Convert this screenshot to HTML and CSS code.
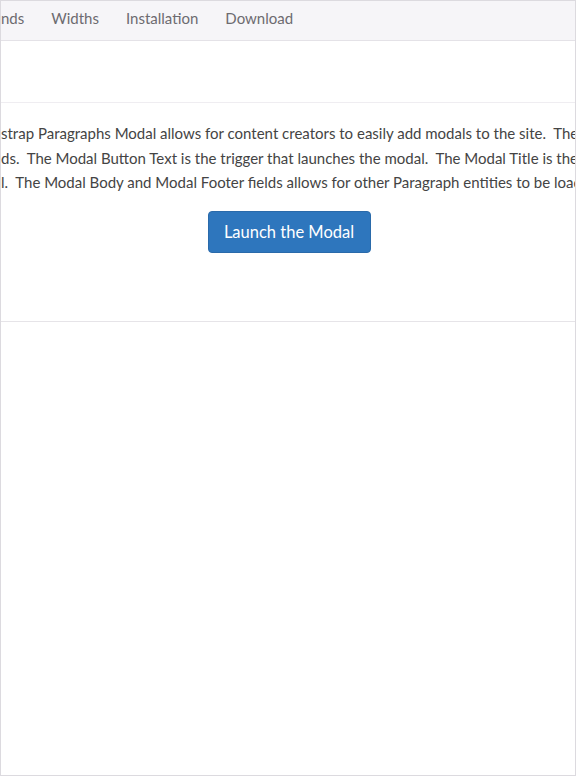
FILE: index.html
```html
<!DOCTYPE html>
<html lang="en">
<head>
<meta charset="utf-8">
<title>Bootstrap Paragraphs Modal</title>
<link rel="stylesheet" href="styles.css">
</head>
<body>
<div class="frame">
  <nav class="nav">
    <a class="nav-link">nds</a>
    <a class="nav-link">Widths</a>
    <a class="nav-link">Installation</a>
    <a class="nav-link">Download</a>
  </nav>
  <div class="spacer"></div>
  <section class="modal-section">
    <div class="desc">
      <p class="line">strap Paragraphs Modal allows for content creators to easily add modals to the site.&nbsp; The</p>
      <p class="line">ds.&nbsp; The Modal Button Text is the trigger that launches the modal.&nbsp; The Modal Title is the</p>
      <p class="line">l.&nbsp; The Modal Body and Modal Footer fields allows for other Paragraph entities to be loaded</p>
    </div>
    <div class="actions">
      <button class="btn-primary" type="button">Launch the Modal</button>
    </div>
  </section>
  <div class="rest"></div>
</div>
</body>
</html>
```

FILE: styles.css
```css
html, body {
  margin: 0;
  padding: 0;
  background: #ffffff;
}

body {
  font-family: "Lato", "Open Sans", sans-serif;
  color: #444;
}

.frame {
  box-sizing: border-box;
  width: 576px;
  height: 776px;
  border: 1px solid #dcdadf;
  overflow: hidden;
  display: flex;
  flex-direction: column;
  background: #fff;
}

.nav {
  display: flex;
  align-items: center;
  gap: 27px;
  box-sizing: border-box;
  height: 40px;
  padding-bottom: 5px;
  background: #f6f5f8;
  border-bottom: 1px solid #e4e2e7;
  white-space: nowrap;
  flex: none;
}

.nav-link {
  font-size: 15px;
  color: #6d6b70;
  text-decoration: none;
}

.spacer {
  height: 61px;
  flex: none;
  border-bottom: 1px solid #efedf1;
}

.modal-section {
  flex: none;
  border-bottom: 1px solid #e6e4e8;
  padding-top: 18px;
  padding-bottom: 68px;
}

.desc {
  overflow: hidden;
  white-space: nowrap;
}

.line {
  margin: 0;
  font-size: 15px;
  line-height: 24.5px;
  color: #444;
}

.actions {
  display: flex;
  justify-content: center;
  padding-top: 16px;
}

.btn-primary {
  font-family: inherit;
  font-size: 16.5px;
  color: #fff;
  background: #2e76bd;
  border: 1px solid #2a6aaa;
  border-radius: 4px;
  width: 163px;
  height: 42px;
  padding: 0;
  margin-left: 2px;
  cursor: pointer;
}

.rest {
  flex: 1;
}
```
